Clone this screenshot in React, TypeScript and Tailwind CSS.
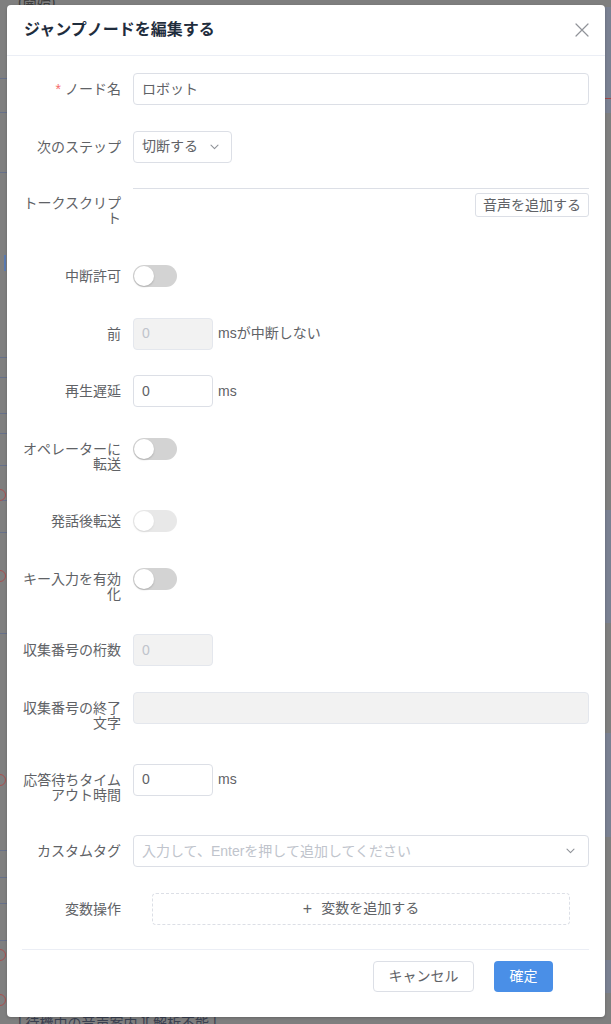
import React from "react";

const FONT = "font-['Liberation_Sans','Noto_Sans_CJK_JP',sans-serif]";

function Chevron() {
  return (
    <svg width="9" height="6" viewBox="0 0 9 6" fill="none" className="shrink-0">
      <path d="M1 1.2 L4.5 4.6 L8 1.2" stroke="#909399" strokeWidth="1.1" strokeLinecap="round" strokeLinejoin="round" />
    </svg>
  );
}

function Switch({ disabled }: { disabled?: boolean }) {
  return (
    <div className={`relative w-[44px] h-[22px] rounded-full bg-[#d3d3d3] ${disabled ? "opacity-50" : ""}`}>
      <span className="absolute left-[1px] top-[1px] w-[20px] h-[20px] rounded-full bg-white shadow-[0_1px_2px_rgba(0,0,0,0.18)]" />
    </div>
  );
}

function Row({
  label,
  required,
  pt = "pt-[9px] pb-[7px]",
  children,
}: {
  label: string;
  required?: boolean;
  pt?: string;
  children: React.ReactNode;
}) {
  return (
    <div className="flex items-start">
      <div className={`w-[111px] shrink-0 pr-[12px] text-right text-[14px] leading-[15px] text-[#606266] ${pt}`}>
        {required && <span className="text-[#f56c6c] mr-[4px]">*</span>}
        {label}
      </div>
      <div className="flex-1 min-w-0">{children}</div>
    </div>
  );
}

function SmallInput({ value, disabled }: { value: string; disabled?: boolean }) {
  return (
    <div
      className={`w-[80px] h-[32px] rounded-[4px] border px-[8px] flex items-center text-[14px] ${
        disabled ? "bg-[#f2f2f2] border-[#e4e7ed] text-[#c0c4cc]" : "bg-white border-[#dcdfe6] text-[#606266]"
      }`}
    >
      {value}
    </div>
  );
}

function SwitchBox({ disabled }: { disabled?: boolean }) {
  return (
    <div className="h-[32px] flex items-center">
      <Switch disabled={disabled} />
    </div>
  );
}

export default function App() {
  const lineY = [78, 112, 172, 357, 377, 413, 433, 465, 500, 532, 633, 850, 877, 903, 940];
  const circles = [495, 576, 780, 955, 1000];
  const rightBands = [
    [7, 113],
    [510, 623],
    [733, 837],
    [960, 993],
  ];
  return (
    <div className={`relative w-[611px] h-[1024px] overflow-hidden bg-[#7f7f7f] ${FONT}`}>
      {/* dimmed page behind the dialog */}
      <div className="absolute left-[18px] top-[-8px] text-[14px] text-[#3c3c3c]">(開始)</div>
      {lineY.map((y) => (
        <div key={y} className="absolute left-0 w-[8px] h-[1px] bg-[#66708a]" style={{ top: y }} />
      ))}
      <div className="absolute left-[4px] top-[255px] w-[2px] h-[16px] bg-[#5a7ab0]" />
      {circles.map((y) => (
        <div key={y} className="absolute left-[-6px] w-[12px] h-[12px] rounded-full border border-[#a85050]" style={{ top: y - 6 }} />
      ))}
      {rightBands.map(([a, b]) => (
        <div key={a} className="absolute left-[605px] w-[6px] bg-[#7a8192]" style={{ top: a, height: b - a }} />
      ))}
      <div className="absolute left-[605px] top-[98px] w-[6px] h-[1px] bg-[#a04848]" />
      <div className="absolute left-[18px] top-[1013px] text-[14px] text-[#3a4050] whitespace-nowrap">
        | 待機中の音声案内 ][ 解析不能 |
      </div>

      {/* dialog */}
      <div className="relative ml-[7px] mt-[5px] w-[598px] bg-white rounded-[4px] shadow-[0_1px_3px_rgba(0,0,0,0.2)]">
        <div className="h-[51px] border-b border-[#ebeef5] flex items-center justify-between pl-[17px] pr-[11px]">
          <div className="text-[16px] font-bold text-[#1f2d3d] leading-none">ジャンプノードを編集する</div>
          <svg width="24" height="24" viewBox="0 0 24 24" fill="none">
            <path d="M18 6 6 18M6 6l12 12" stroke="#909399" strokeWidth="1.2" strokeLinecap="round" />
          </svg>
        </div>

        <div className="pl-[15px] pr-[16px] pt-[17px] pb-[25px]">
          <div className="flex flex-col gap-[25.7px]">
            <Row label="ノード名" required>
              <div className="h-[32px] rounded-[4px] border border-[#dcdfe6] px-[8px] flex items-center text-[14px] text-[#606266]">
                ロボット
              </div>
            </Row>

            <Row label="次のステップ">
              <div className="w-[99px] h-[32px] rounded-[4px] border border-[#dcdfe6] pl-[8px] pr-[12px] flex items-center justify-between text-[14px] text-[#606266]">
                <span>切断する</span>
                <Chevron />
              </div>
            </Row>

            <Row label="トークスクリプト" pt="pt-[7.5px] pb-[8.5px]">
              <div className="border-t border-[#dcdfe6] flex justify-end">
                <div className="mt-[4px] h-[24px] rounded-[3px] border border-[#dcdfe6] px-[7px] flex items-center text-[14px] text-[#606266]">
                  音声を追加する
                </div>
              </div>
            </Row>

            <Row label="中断許可">
              <SwitchBox />
            </Row>

            <Row label="前">
              <div className="flex items-center gap-[5px]">
                <SmallInput value="0" disabled />
                <span className="text-[14px] text-[#606266]">msが中断しない</span>
              </div>
            </Row>

            <Row label="再生遅延">
              <div className="flex items-center gap-[5px]">
                <SmallInput value="0" />
                <span className="text-[14px] text-[#606266]">ms</span>
              </div>
            </Row>

            <Row label="オペレーターに転送">
              <SwitchBox />
            </Row>

            <Row label="発話後転送">
              <SwitchBox disabled />
            </Row>

            <Row label="キー入力を有効化">
              <SwitchBox />
            </Row>

            <Row label="収集番号の桁数">
              <SmallInput value="0" disabled />
            </Row>

            <Row label="収集番号の終了文字">
              <div className="h-[32px] rounded-[4px] border border-[#e4e7ed] bg-[#f2f2f2]" />
            </Row>

            <Row label="応答待ちタイムアウト時間">
              <div className="flex items-center gap-[5px]">
                <SmallInput value="0" />
                <span className="text-[14px] text-[#606266]">ms</span>
              </div>
            </Row>

            <Row label="カスタムタグ">
              <div className="h-[32px] rounded-[4px] border border-[#dcdfe6] pl-[8px] pr-[13px] flex items-center justify-between text-[14px] text-[#c0c4cc]">
                <span>入力して、Enterを押して追加してください</span>
                <Chevron />
              </div>
            </Row>

            <Row label="変数操作">
              <div className="ml-[19px] mr-[19px] h-[32px] rounded-[4px] border border-dashed border-[#dcdfe6] flex items-center justify-center gap-[9px] text-[14px] text-[#606266]">
                <span className="text-[16px] leading-none">+</span>
                <span>変数を追加する</span>
              </div>
            </Row>
          </div>

          <div className="mt-[24px] border-t border-[#ebeef5]" />
          <div className="pt-[11px] pr-[36px] flex justify-end gap-[20px]">
            <div className="w-[101px] h-[31px] rounded-[4px] border border-[#dcdfe6] flex items-center justify-center text-[14px] text-[#606266]">
              キャンセル
            </div>
            <div className="w-[59px] h-[31px] rounded-[4px] bg-[#4a8fe7] flex items-center justify-center text-[14px] text-white">
              確定
            </div>
          </div>
        </div>
      </div>
    </div>
  );
}
